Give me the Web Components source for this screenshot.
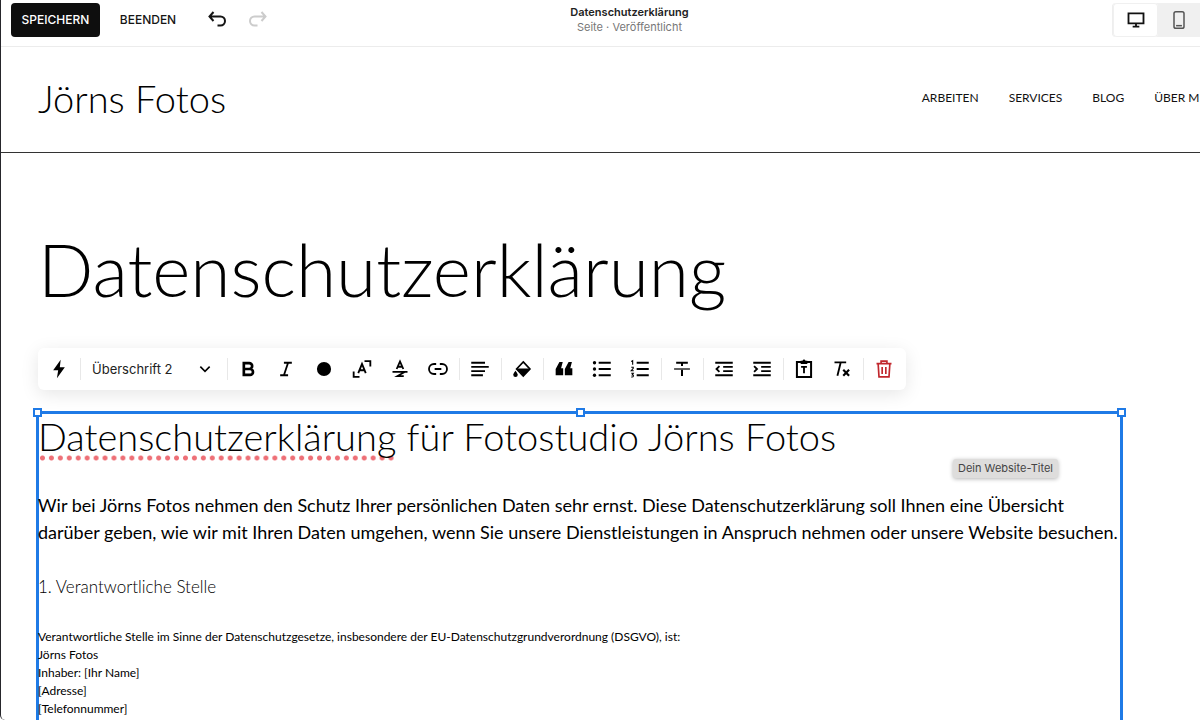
<!DOCTYPE html>
<html lang="de">
<head>
<meta charset="utf-8">
<meta name="viewport" content="width=device-width, initial-scale=1">
<title>Datenschutzerklärung</title>
<style>
html, body { margin: 0; height: 100%; }
body { overflow: hidden; background: #fff; color: #0e0e0e; font-family: Lato, "Liberation Sans", sans-serif; }
</style>
</head>
<body>
<site-editor></site-editor>
<script>
const ICONS = {
  undo: '<path d="M8.500 4 4.500 8.500l4 4.500M5 8.500h10.500a4.500 4.500 0 0 1 0 9H12.500" stroke-width="2"/>',
  redo: '<path d="m15.500 4 4 4.500-4 4.500M19 8.500H8.500a4.500 4.500 0 0 0 0 9h3" stroke-width="2"/>',
  desktop: '<path d="M3 4h18v12H3zM12 16v4M8 20h8" stroke-width="2.200"/>',
  phone: '<rect x="6" y="2" width="12" height="20" rx="2.200" stroke-width="1.800"/><path d="M8.500 18.800h7" stroke-width="1.800"/>',
  bolt: '<path fill="currentColor" stroke="none" d="M14 1 5 13.500h6L9.500 23 19 9.800h-6z"/>',
  chevron: '<path d="m5 8.500 7 7 7-7" stroke-width="2.400"/>',
  bold: '<path d="M7 5h6.500a3.500 3.500 0 0 1 0 7H7zM7 12h7.500a3.500 3.500 0 0 1 0 7H7z" stroke-width="3.200"/>',
  italic: '<path d="M9.500 4.500H19M5 19.500h9.500M14.500 4.500l-5 15" stroke-width="2.200"/>',
  dot: '<circle cx="12" cy="12" r="8.500" fill="currentColor" stroke="none"/>',
  size: '<path d="M15 2.500h7v6.500M2 15v6.500h7" stroke-width="2.200"/><path d="m7.500 17 4.500-11 4.500 11M9 13.500h6" stroke-width="2.200"/>',
  highlight: '<path d="M8 12l4-9 4 9M9.300 9.300h5.400M3 15.500h18M17.500 15.500 9 20.500h7.500" stroke-width="2.200"/>',
  link: '<path d="M9.800 6H7.200a6 6 0 0 0 0 12h2.600M14.200 6h2.600a6 6 0 0 1 0 12h-2.600M8 12h8" stroke-width="2.200"/>',
  align: '<path d="M1.500 4.500H18M1.500 9.500h21M1.500 14.500H18M1.500 19.500h14" stroke-width="2.200"/>',
  fill: '<path d="m13.500 3.500 8 8.500-8 8.500-8-8.500z" stroke-width="2"/><path fill="currentColor" stroke="none" d="M5.500 11.500h16l-8 9zM4.200 14s-2.700 3.300-2.700 5a2.700 2.700 0 0 0 5.400 0c0-1.700-2.700-5-2.700-5z"/>',
  quote: '<path fill="currentColor" stroke="none" d="M6.500 3.500h4L8.500 11H11v8.500H2V12zM17.500 3.500h4L19.500 11H22v8.500h-9V12z"/>',
  bullets: '<path d="M8 4.500h14.500M8 12h14.500M8 19.500h14.500" stroke-width="2.200"/><g fill="currentColor" stroke="none"><circle cx="3" cy="4.500" r="2"/><circle cx="3" cy="12" r="2"/><circle cx="3" cy="19.500" r="2"/></g>',
  numbers: '<path d="M8 4.500h14.500M8 12h14.500M8 19.500h14.500" stroke-width="2.200"/><path d="M1.500 3 3.200 2v5M1.500 9.800h2.400v1.500L1.500 14h3M1.500 17H4l-1.300 2c2 0 2 3-1.200 2.500" stroke-width="1.300"/>',
  strike: '<path d="M5 4.500h14M12 4.500v4M12 13v7.500" stroke-width="2.400"/><path d="M2.500 12h19" stroke-width="1.500"/>',
  outdent: '<path d="M1.500 4.500h21M11 9.500h11.500M11 14.500h11.500M1.500 19.500h21M6.500 8.500 3 12l3.500 3.500" stroke-width="2.200"/>',
  indent: '<path d="M1.500 4.500h21M11 9.500h11.500M11 14.500h11.500M1.500 19.500h21M2.500 8.500 6 12l-3.500 3.500" stroke-width="2.200"/>',
  paste: '<path d="M3.500 3.500h17v18h-17z" stroke-width="2.400"/><path d="M8.500 9.500h7M12 9.500v7.500" stroke-width="2.200"/><path fill="currentColor" stroke="none" d="M8 2h2.200a1.900 1.900 0 0 1 3.600 0H16v4H8z"/>',
  clear: '<path d="M3 4h14M10.500 4 6.500 20" stroke-width="2.200"/><path d="m13.500 13 7 7M20.500 13l-7 7" stroke-width="2.600"/>',
  trash: '<path d="M3 5.500h18M8.500 5V2.500h7V5M5 6l1 15.500h12L19 6M9.800 9.500v8.500M14.200 9.500v8.500" stroke-width="2"/>'
};

function define(name, markup, setup) {
  const template = document.createElement('template');
  template.innerHTML = markup;
  customElements.define(name, class extends HTMLElement {
    connectedCallback() {
      if (this.shadowRoot) return;
      this.attachShadow({ mode: 'open' }).append(template.content.cloneNode(true));
      if (setup) setup(this, this.shadowRoot);
    }
  });
}

define('ui-icon', `
<style>
:host { display: block; flex: none; width: 20px; height: 20px; }
svg { display: block; width: 100%; height: 100%; fill: none; stroke: currentColor; }
</style>
<svg viewBox="0 0 24 24" aria-hidden="true"></svg>`,
(host, root) => { root.querySelector('svg').innerHTML = ICONS[host.getAttribute('name')]; });

define('tool-button', `
<style>
:host { display: block; flex: none; }
button { display: grid; place-items: center; width: 38px; height: 38px; padding: 0; border: 0; background: none; color: inherit; }
</style>
<button type="button"></button>`,
(host, root) => {
  const button = root.querySelector('button');
  const icon = document.createElement('ui-icon');
  icon.setAttribute('name', host.getAttribute('icon'));
  button.setAttribute('aria-label', host.getAttribute('label'));
  button.append(icon);
});

define('tool-group', `
<style>
:host { display: flex; align-items: center; }
:host(:not(:last-child))::after { content: ""; width: 1px; height: 22px; margin: 0 1px 0 2px; background: #e8e8e8; }
</style>
<slot></slot>`);

define('style-picker', `
<style>
:host { display: grid; width: 143px; align-items: center; }
select, ui-icon { grid-area: 1 / 1; }
select { appearance: none; width: 100%; height: 38px; margin: 0; padding: 0 30px 0 10px; border: 0; background: none; color: #222; font: 13px/20px Inter, sans-serif; }
ui-icon { justify-self: end; width: 16px; height: 16px; margin-right: 12px; pointer-events: none; }
</style>
<select aria-label="Textformat"><option>Überschrift 2</option></select>
<ui-icon name="chevron"></ui-icon>`);

define('format-toolbar', `
<style>
:host { display: flex; flex: none; align-items: center; width: max-content; height: 42px; padding: 0 3px 0 2px; box-sizing: border-box; border-radius: 6px; background: #fff; box-shadow: 0 4px 18px rgba(0,0,0,.1); }
.danger { color: #c1272d; }
</style>
<tool-group><tool-button icon="bolt" label="Aktionen"></tool-button></tool-group>
<tool-group><style-picker></style-picker></tool-group>
<tool-group>
<tool-button icon="bold" label="Fett"></tool-button><tool-button icon="italic" label="Kursiv"></tool-button><tool-button icon="dot" label="Farbe"></tool-button><tool-button icon="size" label="Textgröße"></tool-button><tool-button icon="highlight" label="Hervorheben"></tool-button><tool-button icon="link" label="Link"></tool-button>
</tool-group>
<tool-group><tool-button icon="align" label="Ausrichtung"></tool-button></tool-group>
<tool-group><tool-button icon="fill" label="Hintergrund"></tool-button></tool-group>
<tool-group><tool-button icon="quote" label="Zitat"></tool-button><tool-button icon="bullets" label="Aufzählung"></tool-button><tool-button icon="numbers" label="Nummerierung"></tool-button></tool-group>
<tool-group><tool-button icon="strike" label="Durchgestrichen"></tool-button></tool-group>
<tool-group><tool-button icon="outdent" label="Einzug verkleinern"></tool-button><tool-button icon="indent" label="Einzug vergrößern"></tool-button></tool-group>
<tool-group><tool-button icon="paste" label="Als Text einfügen"></tool-button><tool-button icon="clear" label="Formatierung löschen"></tool-button></tool-group>
<tool-group><tool-button class="danger" icon="trash" label="Löschen"></tool-button></tool-group>`);

define('editor-bar', `
<style>
:host { display: grid; grid-template-columns: 1fr auto 1fr; height: 46px; border-bottom: 1px solid #ececec; font-family: Inter, sans-serif; }
.actions { display: flex; align-items: center; height: 40px; padding-left: 10px; }
button { display: grid; place-items: center; height: 34px; margin: 0; padding: 0; border: 0; background: none; color: #151515; font: 500 12px/16px Inter, sans-serif; }
.save { width: 89px; border-radius: 4px; background: #0e0e0e; color: #fff; }
.exit { width: 96px; }
.history { width: 41px; }
.history ui-icon { width: 24px; height: 24px; }
.history:disabled { color: #ccc; }
.title { padding: 5px 0 0 58px; text-align: center; font-size: 11px; line-height: 15px; color: #777; }
.title strong { display: block; font-weight: 600; color: #222; }
.devices { display: flex; justify-self: end; height: 34px; margin-top: 3px; border-left: 1px solid #eee; border-radius: 4px 0 0 4px; background: #f0f0f0; }
.devices button { width: 42px; color: #555; }
.devices .on { width: 45px; background: #fff; color: #111; box-shadow: inset 0 0 0 1px #f0f0f0; border-radius: 4px; }
</style>
<div class="actions">
<button type="button" class="save">SPEICHERN</button><button type="button" class="exit">BEENDEN</button><button type="button" class="history" aria-label="Rückgängig"><ui-icon name="undo"></ui-icon></button><button type="button" class="history" aria-label="Wiederholen" disabled><ui-icon name="redo"></ui-icon></button>
</div>
<div class="title"><strong>Datenschutzerklärung</strong>Seite · Veröffentlicht</div>
<div class="devices"><button type="button" class="on" aria-label="Desktop"><ui-icon name="desktop"></ui-icon></button><button type="button" aria-label="Mobil"><ui-icon name="phone"></ui-icon></button></div>`);

define('site-header', `
<style>
:host { display: flex; align-items: center; justify-content: space-between; height: 106px; padding: 0 0 4px 37px; box-sizing: border-box; border-bottom: 1px solid #333; }
a { color: #111; text-decoration: none; white-space: nowrap; }
.logo { font-size: 38px; line-height: 48px; font-weight: 300; color: #000; }
nav { display: flex; gap: 30px; margin-right: -20px; font-size: 12px; line-height: 18px; }
</style>
<a class="logo" href="#">Jörns Fotos</a>
<nav><a href="#">ARBEITEN</a><a href="#">SERVICES</a><a href="#">BLOG</a><a href="#">ÜBER MICH</a></nav>`);

define('selection-frame', `
<style>
:host { display: block; position: relative; }
.frame { position: absolute; inset: -1px -2px 0; border: 3px solid #1f7ae6; border-bottom: 0; pointer-events: none; }
.handle { position: absolute; top: -6px; width: 5px; height: 5px; border: 2px solid #1f7ae6; background: #fff; }
.start { left: -6px; }
.mid { left: calc(50% - 4px); }
.end { right: -6px; }
.content { position: relative; }
</style>
<div class="frame"><i class="handle start"></i><i class="handle mid"></i><i class="handle end"></i></div>
<div class="content"><slot></slot></div>`);

define('hover-tip', `
<style>
:host { display: block; position: absolute; padding: 0 5px; border-radius: 3px; background: #dedddc; color: #444; font: 11px/19px Inter, sans-serif; white-space: nowrap; box-shadow: 0 1px 4px rgba(0,0,0,.3); }
</style>
<slot></slot>`);

define('privacy-page', `
<style>
:host { display: flex; flex: 1; flex-direction: column; min-height: 0; padding: 72px 79px 0 37px; color: #000; }
h1, h2, h3, p { margin: 0; }
h1 { font-size: 73px; line-height: 88px; font-weight: 300; }
h2 { padding-bottom: 2px; font-size: 38px; line-height: 48px; font-weight: 300; }
h3 { font-size: 17px; line-height: 22px; font-weight: 300; }
format-toolbar { margin: 35px 0 22px; }
selection-frame { flex: 1; }
.lead { margin: 30px 0; font-size: 18px; line-height: 27px; }
.small { margin-top: 30px; font-size: 12px; line-height: 18px; }
.misspelt { padding-bottom: 2px; background: radial-gradient(circle, #ee7077 2px, transparent 3px) 0 100% / 9px 6px; background-repeat: round no-repeat; }
hover-tip { top: 47px; right: 63px; }
</style>
<h1>Datenschutzerklärung</h1>
<format-toolbar role="toolbar" aria-label="Text formatieren"></format-toolbar>
<selection-frame>
<h2><span class="misspelt">Datenschutzerklärung</span> für Fotostudio Jörns Fotos</h2>
<p class="lead">Wir bei Jörns Fotos nehmen den Schutz Ihrer persönlichen Daten sehr ernst. Diese Datenschutzerklärung soll Ihnen eine Übersicht darüber geben, wie wir mit Ihren Daten umgehen, wenn Sie unsere Dienstleistungen in Anspruch nehmen oder unsere Website besuchen.</p>
<h3>1. Verantwortliche Stelle</h3>
<p class="small">Verantwortliche Stelle im Sinne der Datenschutzgesetze, insbesondere der EU-Datenschutzgrundverordnung (DSGVO), ist:<br>Jörns Fotos<br>Inhaber: [Ihr Name]<br>[Adresse]<br>[Telefonnummer]</p>
<hover-tip role="tooltip">Dein Website-Titel</hover-tip>
</selection-frame>`);

define('site-editor', `
<style>
:host { display: flex; flex-direction: column; height: 100vh; box-sizing: border-box; overflow: hidden; border-left: 1px solid #26262b; border-bottom-left-radius: 5px; }
editor-bar, site-header { flex: none; }
</style>
<editor-bar></editor-bar>
<site-header></site-header>
<privacy-page></privacy-page>`);
</script>
</body>
</html>
